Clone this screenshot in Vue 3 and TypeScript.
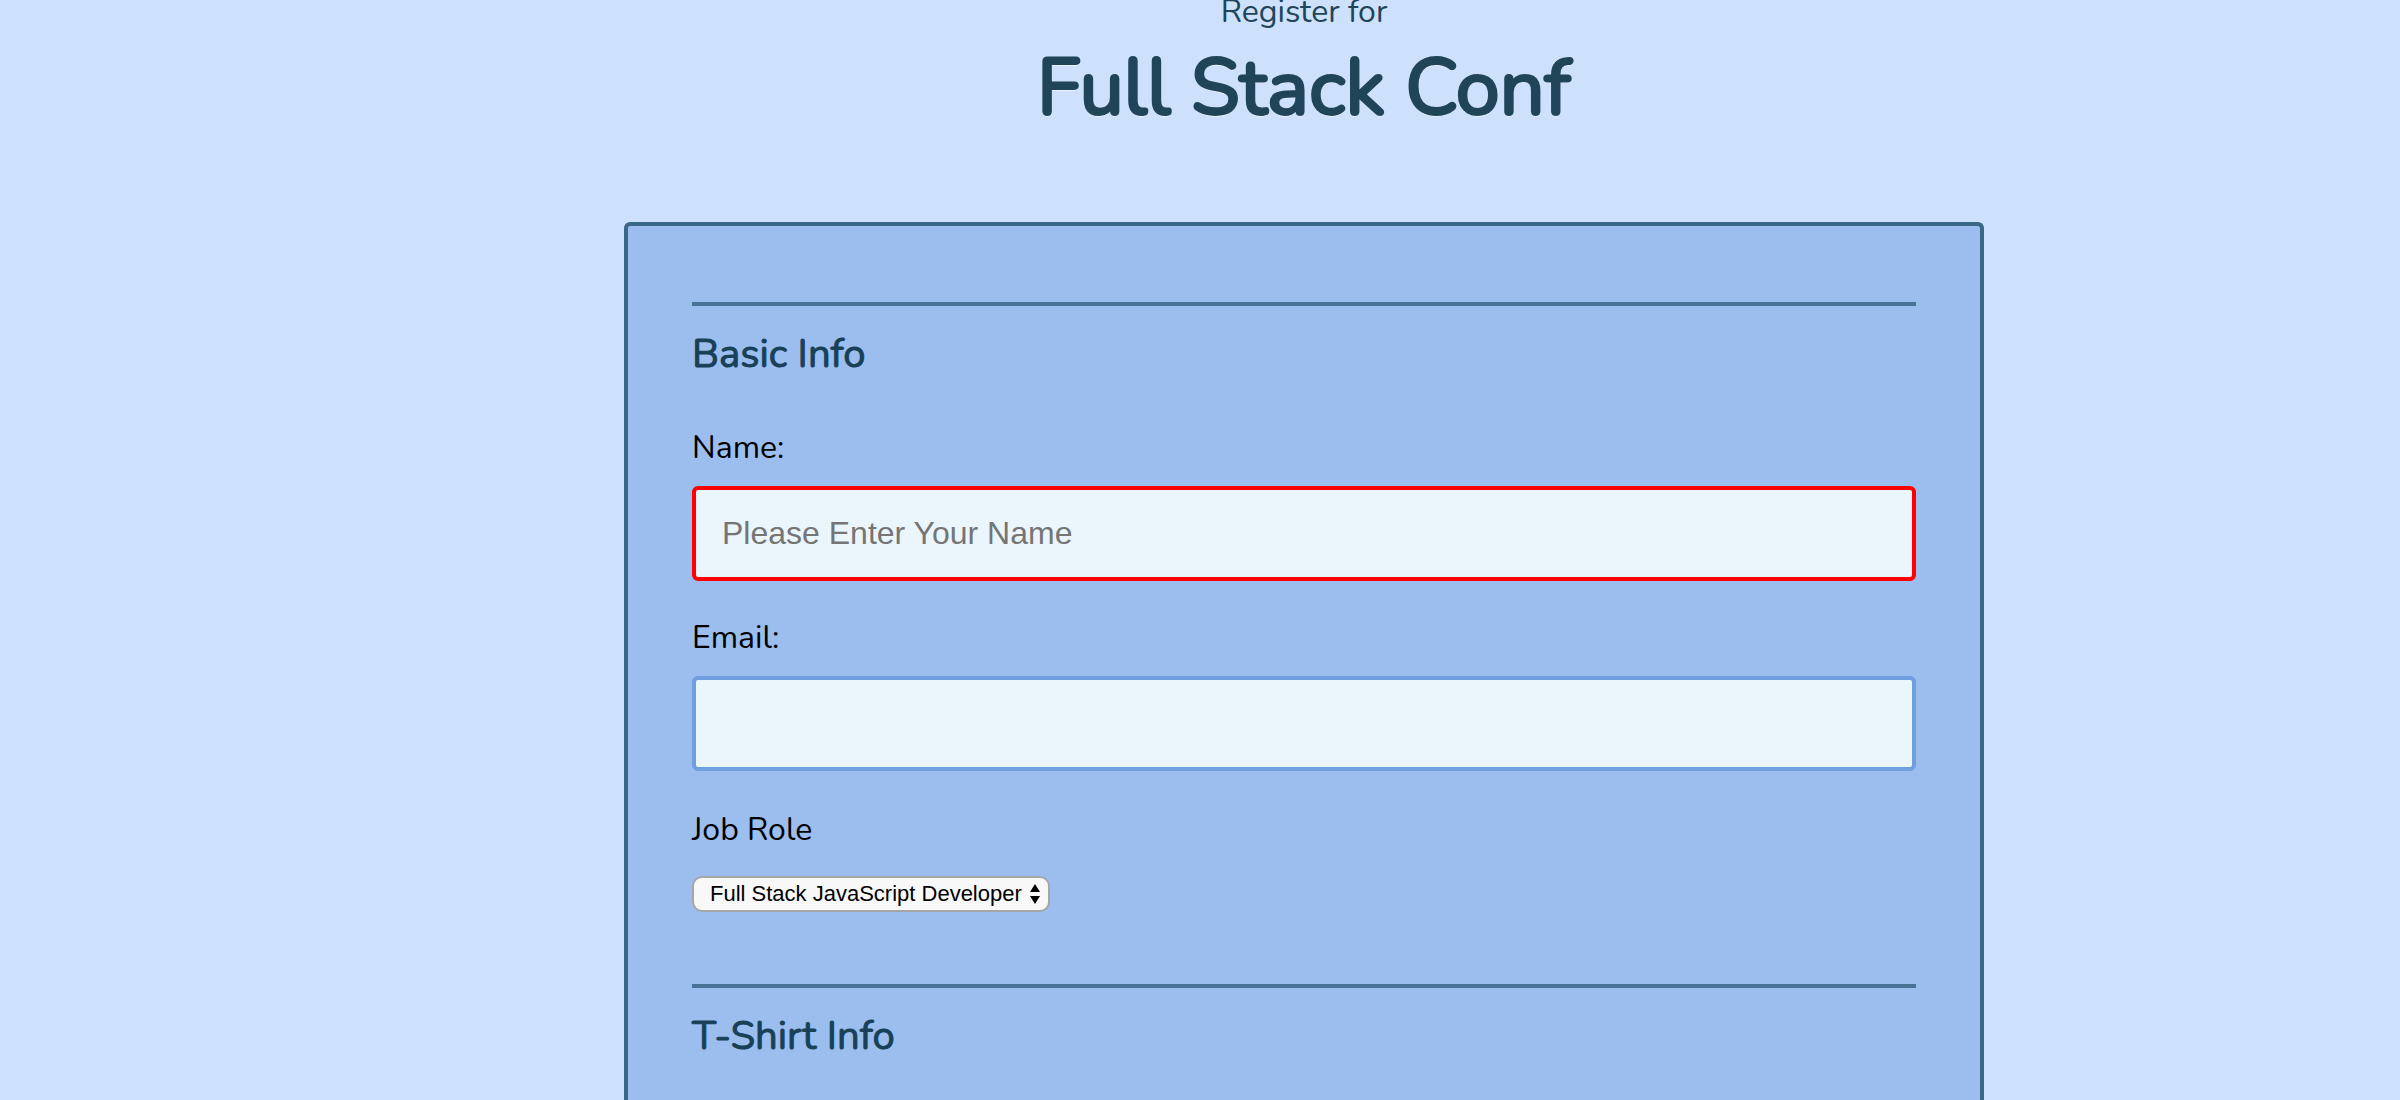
<script setup lang="ts">
import { ref } from 'vue'

const name = ref('')
const email = ref('')
const jobRole = ref('full-stack')

const jobRoles: { value: string; label: string }[] = [
  { value: 'full-stack', label: 'Full Stack JavaScript Developer' },
]
</script>

<template>
  <div class="page">
    <header class="intro">
      <p class="lead">Register for</p>
      <h1 class="title">Full Stack Conf</h1>
    </header>

    <form class="card" novalidate @submit.prevent>
      <fieldset class="group">
        <legend class="legend">Basic Info</legend>

        <div class="field">
          <label class="label" for="name">Name:</label>
          <input
            id="name"
            v-model="name"
            class="input"
            :class="{ invalid: !name }"
            type="text"
            placeholder="Please Enter Your Name"
          />
        </div>

        <div class="field">
          <label class="label" for="email">Email:</label>
          <input id="email" v-model="email" class="input" type="email" />
        </div>

        <div class="field role">
          <label class="label" for="role">Job Role</label>
          <div class="select-wrap">
            <select id="role" v-model="jobRole" class="select">
              <option v-for="role in jobRoles" :key="role.value" :value="role.value">
                {{ role.label }}
              </option>
            </select>
            <svg class="arrows" viewBox="0 0 10 20" aria-hidden="true">
              <path d="M5 0 L10 8 H0 Z M0 12 H10 L5 20 Z" />
            </svg>
          </div>
        </div>
      </fieldset>

      <fieldset class="group">
        <legend class="legend">T-Shirt Info</legend>
      </fieldset>
    </form>
  </div>
</template>

<style>
body {
  background: #cde0fc;
}
</style>

<style scoped>
.page {
  box-sizing: border-box;
  display: grid;
  grid-template-columns: 39fr 85fr 26fr;
  grid-template-rows: auto 1fr;
  height: 100vh;
  overflow: hidden;
  background: #cde0fc;
  font-family: Nunito, Lato, sans-serif;
  font-size: 32px;
  line-height: 40px;
  color: #000;
}

.intro {
  grid-column: 2;
  height: 222px;
  text-align: center;
  color: #204558;
}

.lead {
  margin: -8px 0 0;
}

.title {
  margin: 4px 0 0;
  font-size: 79px;
  font-weight: 400;
  line-height: 104px;
  -webkit-text-stroke: 3px #204558;
  text-shadow: 0 2px 0 #fff;
}

.card {
  grid-column: 2;
  box-sizing: border-box;
  min-width: 0;
  padding: 76px 64px 0;
  border: 4px solid #396785;
  border-bottom: 0;
  border-radius: 6px 6px 0 0;
  background: #9bbeef;
}

.group {
  min-width: 0;
  margin: 0 0 72px;
  padding: 0;
  border: 0;
}

.legend {
  box-sizing: border-box;
  width: 100%;
  margin-bottom: 50px;
  padding: 24px 0 0;
  border-top: 4px solid #487397;
  font-size: 40px;
  line-height: 48px;
  color: #184158;
  -webkit-text-stroke: 1px #184158;
}

.field {
  display: flex;
  flex-direction: column;
  gap: 18px;
  margin-bottom: 37px;
}

.role {
  gap: 26px;
  margin: 39px 0 0;
}

.field:has(+ .role) {
  margin-bottom: 0;
}

.input {
  box-sizing: border-box;
  width: 100%;
  height: 95px;
  padding: 0 26px;
  border: 4px solid #6f9fdd;
  border-radius: 6px;
  outline: 0;
  background: #ebf5fc;
  font: 32px "Liberation Sans", Arial, sans-serif;
  color: #000;
}

.input::placeholder {
  color: #757575;
  opacity: 1;
}

.invalid {
  border-color: #f00;
}

.select-wrap {
  position: relative;
  align-self: flex-start;
  display: flex;
}

.select {
  appearance: none;
  box-sizing: border-box;
  height: 36px;
  padding: 0 26px 2px 16px;
  border: 2px solid #a6a6a6;
  border-radius: 10px;
  background: #f8f8f8;
  font: 22px "Liberation Sans", Arial, sans-serif;
  color: #000;
}

.arrows {
  position: absolute;
  top: 8px;
  right: 10px;
  width: 10px;
  height: 20px;
  pointer-events: none;
}
</style>
